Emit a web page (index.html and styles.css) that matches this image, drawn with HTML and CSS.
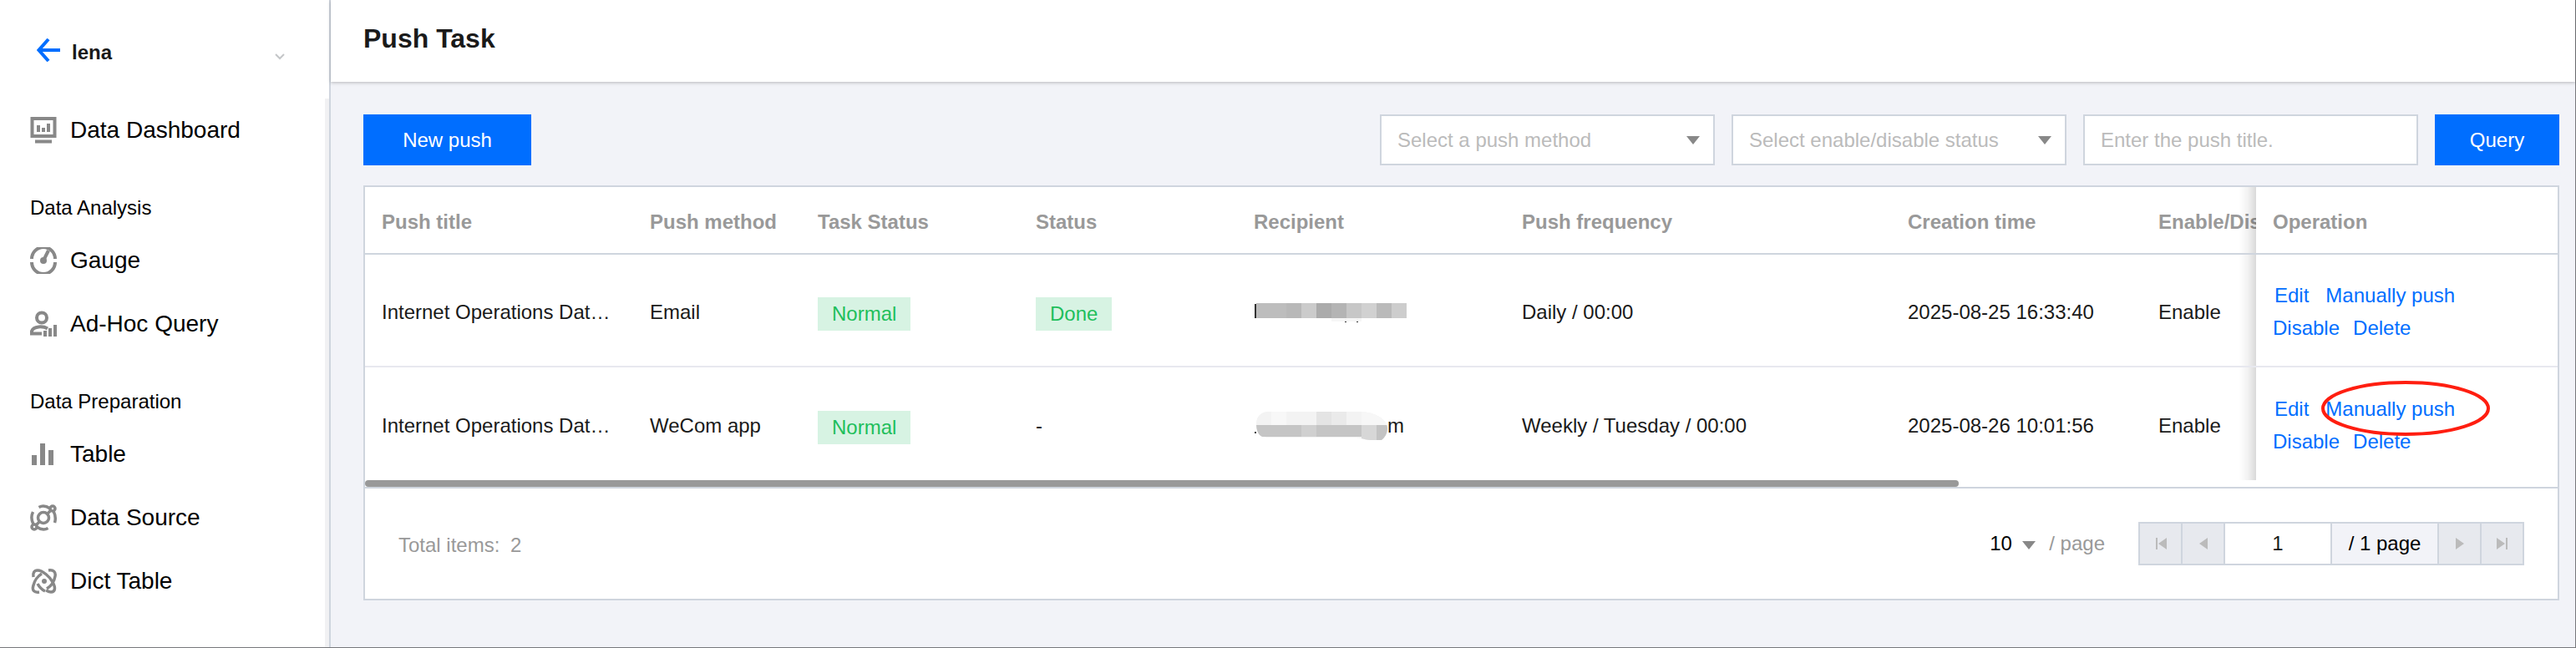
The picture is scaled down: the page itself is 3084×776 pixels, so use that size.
FILE: index.html
```
<!DOCTYPE html>
<html lang="en">
<head>
<meta charset="UTF-8">
<title>Push Task</title>
<link rel="stylesheet" href="styles.css">
</head>
<body>
<div class="page">

	<div class="sidebar">
		<div class="project">
			<a href="#" class="back" aria-label="Back">
				<svg width="28" height="28" viewBox="0 0 28 28"><path d="M14 1 L2.500 14 L14 27 M2.500 14 H28" fill="none" stroke="#006eff" stroke-width="4"/></svg>
			</a>
			<span class="project-name">lena</span>
			<svg class="chevron" width="12" height="8" viewBox="0 0 12 8"><path d="M1 1 L6 6 L11 1" fill="none" stroke="#c4c6c8" stroke-width="2"/></svg>
		</div>
		<nav class="menu">
			<a href="#" class="item">
				<svg width="32" height="32" viewBox="0 0 32 32"><path d="M2.500 2 H29.500 V23 H2.500 Z" fill="none" stroke="#888" stroke-width="4"/><path d="M8 10h4v8H8z M14 13h4v5h-4z M20 8h4v10h-4z M6 27.500h20v4H6z" fill="#888"/></svg>
				Data Dashboard
			</a>
			<div class="group">Data Analysis</div>
			<a href="#" class="item">
				<svg width="32" height="32" viewBox="0 0 32 32"><path d="M2 14 A14 14 0 0 1 30 14 M2 18 A14 14 0 0 0 30 18" fill="none" stroke="#888" stroke-width="4"/><path d="M16 16 L22 4" stroke="#888" stroke-width="4"/><circle cx="16" cy="16" r="4" fill="#888"/></svg>
				Gauge
			</a>
			<a href="#" class="item">
				<svg width="32" height="32" viewBox="0 0 32 32"><circle cx="14" cy="8.500" r="6" fill="none" stroke="#888" stroke-width="4"/><path d="M21 21.500 C16 18.500 4 18 2 24.500 V27.500 H14" fill="none" stroke="#888" stroke-width="4"/><path d="M16 24h4v7h-4z M22 21h4v10h-4z M28 17h4v14h-4z" fill="#888"/></svg>
				Ad-Hoc Query
			</a>
			<div class="group">Data Preparation</div>
			<a href="#" class="item">
				<svg width="32" height="32" viewBox="0 0 32 32"><path d="M2 17h6v12H2z M12 3h6v26h-6z M22 11h6v18h-6z" fill="#888"/></svg>
				Table
			</a>
			<a href="#" class="item">
				<svg width="32" height="32" viewBox="0 0 32 32" fill="none" stroke="#888" stroke-width="3.500"><circle cx="16" cy="16" r="6.500"/><circle cx="27" cy="5" r="3"/><circle cx="5" cy="27" r="3"/><path d="M10.500 3.500 C14 1.500 19 1.500 24 5 M25 7 L20.500 11.500 M28 8 C30.500 13 31 17 29.500 22 M21.500 28.500 C18 30.500 13 30.500 8 27 M7 25 L11.500 20.500 M4 24 C1.500 19 1 14 3.500 9"/></svg>
				Data Source
			</a>
			<a href="#" class="item">
				<svg width="32" height="32" viewBox="0 0 32 32" fill="none" stroke="#888" stroke-width="3.500"><circle cx="17" cy="16" r="3" fill="#888" stroke="none"/><path d="M4 11 C3 6 5 3 9 3 C15 3 24 11 27 17 C31 24 30 29 25 29 C23 29 21 28 19 27 M9 19 C11 23 14 26 18 28"/><path d="M22 3 C28 2 31 5 30 10 C29 16 25 22 20 25 M11 29 C5 30 2 27 4 21 C5 16 9 10 14 7"/></svg>
				Dict Table
			</a>
		</nav>
	</div>

	<div class="main">
		<div class="header"><h1>Push Task</h1></div>
		<div class="content">

			<div class="toolbar">
				<button class="btn">New push</button>
				<div class="filters">
					<div class="select">
						<select aria-label="Push method"><option>Select a push method</option></select>
						<svg class="caret" width="16" height="10" viewBox="0 0 16 10"><path d="M0 0 H16 L8 10 Z" fill="#888"/></svg>
					</div>
					<div class="select">
						<select aria-label="Status"><option>Select enable/disable status</option></select>
						<svg class="caret" width="16" height="10" viewBox="0 0 16 10"><path d="M0 0 H16 L8 10 Z" fill="#888"/></svg>
					</div>
					<input type="text" class="search" placeholder="Enter the push title." aria-label="Push title">
					<button class="btn query">Query</button>
				</div>
			</div>

			<div class="card">
				<div class="scroller">
					<table>
						<colgroup>
							<col class="c-title"><col class="c-method"><col class="c-state"><col class="c-state">
							<col class="c-recipient"><col class="c-freq"><col class="c-time"><col><col class="c-op">
						</colgroup>
						<thead>
							<tr>
								<th>Push title</th>
								<th>Push method</th>
								<th>Task Status</th>
								<th>Status</th>
								<th>Recipient</th>
								<th>Push frequency</th>
								<th>Creation time</th>
								<th>Enable/Disable</th>
								<th class="fixed">Operation</th>
							</tr>
						</thead>
						<tbody>
							<tr>
								<td>Internet Operations Dat…</td>
								<td>Email</td>
								<td><span class="tag">Normal</span></td>
								<td><span class="tag">Done</span></td>
								<td>
									<svg class="mosaic" width="182" height="24" viewBox="0 0 182 24" shape-rendering="crispEdges">
										<path d="M0 1h2v17H0z" fill="#333"/>
										<path d="M2 0h36v18H2z" fill="#bdbdbd"/><path d="M38 0h18v18H38z" fill="#b8b8b8"/>
										<path d="M56 0h18v18H56z" fill="#cbcbcb"/><path d="M74 0h18v18H74z" fill="#ababab"/>
										<path d="M92 0h18v18H92z" fill="#b4b4b4"/><path d="M110 0h18v18h-18z" fill="#c7c7c7"/>
										<path d="M128 0h18v18h-18z" fill="#d1d1d1"/><path d="M146 0h18v18h-18z" fill="#bababa"/>
										<path d="M164 0h18v18h-18z" fill="#cdcdcd"/><path d="M92 18h36v4H92z" fill="#f6f6f6"/>
										<path d="M108 22h2v1h-2z M122 22h2v1h-2z" fill="#333"/>
									</svg>
								</td>
								<td>Daily / 00:00</td>
								<td>2025-08-25 16:33:40</td>
								<td>Enable</td>
								<td class="fixed">
									<div class="ops first"><a href="#">Edit</a><a href="#">Manually push</a></div>
									<div class="ops"><a href="#">Disable</a><a href="#">Delete</a></div>
								</td>
							</tr>
							<tr>
								<td>Internet Operations Dat…</td>
								<td>WeCom app</td>
								<td><span class="tag">Normal</span></td>
								<td>-</td>
								<td>
									<span class="masked">
										<svg class="mosaic" width="159" height="34" viewBox="0 0 159 34">
											<clipPath id="blob"><path d="M2 14 C2 6 8 0 16 0 H126 C142 0 159 8 159 20 C159 26 156 31 152 34 H138 C132 34 128 31 120 31 H16 C8 31 2 28 2 14 Z"/></clipPath>
											<path d="M0 24h2v2H0z M108 29h3v2h-3z" fill="#333"/>
											<g clip-path="url(#blob)" shape-rendering="crispEdges">
												<path d="M0 0h159v34H0z" fill="#f3f3f3"/>
												<path d="M20 0h18v16H20z" fill="#f8f8f8"/><path d="M74 0h18v16H74z" fill="#e4e4e4"/>
												<path d="M92 0h18v16H92z" fill="#eaeaea"/><path d="M128 0h31v16h-31z" fill="#f7f7f7"/>
												<path d="M2 16h126v14H2z" fill="#c5c5c5"/><path d="M56 16h18v14H56z" fill="#d0d0d0"/>
												<path d="M128 16h18v18h-18z" fill="#d7d7d7"/><path d="M146 16h13v18h-13z" fill="#c3c3c3"/>
											</g>
										</svg>m
									</span>
								</td>
								<td>Weekly / Tuesday / 00:00</td>
								<td>2025-08-26 10:01:56</td>
								<td>Enable</td>
								<td class="fixed">
									<div class="ops first"><a href="#">Edit</a><a href="#" class="marked">Manually push<svg class="ring" width="202" height="66" viewBox="0 0 202 66"><ellipse cx="101" cy="33" rx="99" ry="31" fill="none" stroke="#ff1e10" stroke-width="4"/></svg></a></div>
									<div class="ops"><a href="#">Disable</a><a href="#">Delete</a></div>
								</td>
							</tr>
						</tbody>
					</table>
				</div>
				<div class="scrollbar"><div class="thumb"></div></div>

				<div class="footer">
					<div class="total">Total items: <span>2</span></div>
					<div class="size">
						<div class="size-select">
							<select aria-label="Items per page"><option>10</option></select>
							<svg class="caret" width="16" height="10" viewBox="0 0 16 10"><path d="M0 0 H16 L8 10 Z" fill="#888"/></svg>
						</div>
						<span>/ page</span>
					</div>
					<div class="pager">
						<button disabled aria-label="First page"><svg width="14" height="14" viewBox="0 0 14 14"><path d="M1 0h2v14H1z M14 0v14L4 7z" fill="#bbb"/></svg></button>
						<button disabled aria-label="Previous page"><svg width="10" height="14" viewBox="0 0 10 14"><path d="M10 0v14L0 7z" fill="#bbb"/></svg></button>
						<input type="text" value="1" aria-label="Page">
						<span class="pages">/ 1 page</span>
						<button disabled aria-label="Next page"><svg width="10" height="14" viewBox="0 0 10 14"><path d="M0 0v14l10-7z" fill="#bbb"/></svg></button>
						<button disabled aria-label="Last page"><svg width="14" height="14" viewBox="0 0 14 14"><path d="M11 0h2v14h-2z M0 0v14l10-7z" fill="#bbb"/></svg></button>
					</div>
				</div>
			</div>

		</div>
	</div>

</div>
</body>
</html>
```
FILE: styles.css
```
* {
	box-sizing: border-box;
}

body {
	margin: 0;
	font-family: "Liberation Sans", Arial, sans-serif;
	font-size: 24px;
	line-height: 28px;
	color: #1a1a1a;
}

a {
	color: #006eff;
	text-decoration: none;
}

svg {
	display: block;
	flex: none;
}

button, input, select {
	font: inherit;
	margin: 0;
	border-radius: 0;
}

.page {
	display: flex;
	min-height: 100vh;
	border-right: 1px solid #77787c;
	border-bottom: 1px solid #77787c;
}

/* sidebar */
.sidebar {
	flex: none;
	display: flex;
	flex-direction: column;
	width: 396px;
	border-right: 2px solid #cfd5de;
	background: #fff;
}

.project {
	display: flex;
	align-items: center;
	height: 118px;
	padding: 2px 53px 0 44px;
}

.project-name {
	flex: 1;
	padding: 6px 0 0 14px;
	font-weight: bold;
}

.chevron {
	margin-top: 16px;
}

.menu {
	flex: 1;
	border-right: 5px solid #f1f1f3;
	padding-left: 36px;
}

.item {
	display: flex;
	align-items: center;
	gap: 16px;
	height: 76px;
	font-size: 28px;
	color: #000;
}

.group {
	height: 80px;
	padding-top: 32px;
	line-height: 46px;
	color: #000;
}

/* main */
.main {
	flex: 1;
	min-width: 0;
	background: #f2f3f8;
}

.header {
	height: 98px;
	padding-left: 39px;
	background: #fff;
	box-shadow: 0 1px 4px rgba(0, 0, 0, 0.25);
}

h1 {
	margin: 0;
	font-size: 32px;
	line-height: 92px;
}

.content {
	padding: 39px 19px 24px 39px;
}

.toolbar {
	display: flex;
	justify-content: space-between;
	margin-bottom: 24px;
}

.btn {
	width: 201px;
	height: 61px;
	padding: 0;
	border: 0;
	background: #006eff;
	color: #fff;
}

.query {
	width: 149px;
}

.filters {
	display: flex;
	gap: 20px;
}

.select {
	position: relative;
	width: 401px;
}

.select select, .search {
	width: 401px;
	height: 61px;
	padding: 0 19px;
	border: 2px solid #cfd5de;
	background: #fff;
	color: #bbb;
}

.search::placeholder {
	color: #bbb;
	opacity: 1;
}

select {
	appearance: none;
}

.caret {
	position: absolute;
	right: 18px;
	top: 26px;
	pointer-events: none;
}

/* table */
.card {
	border: 2px solid #cfd5de;
	background: #fff;
}

.scroller {
	overflow: hidden;
}

table {
	width: 3612px;
	table-layout: fixed;
	border-collapse: separate;
	border-spacing: 0;
}

.c-title, .c-recipient { width: 321px; }
.c-method { width: 201px; }
.c-state { width: 261px; }
.c-freq { width: 462px; }
.c-time { width: 300px; }
.c-op { width: 361px; }

th, td {
	padding: 0 20px;
	text-align: left;
	white-space: nowrap;
	overflow: hidden;
	text-overflow: ellipsis;
}

th {
	height: 81px;
	padding-top: 4px;
	border-bottom: 2px solid #cfd5de;
	color: #999;
}

td {
	height: 135px;
	padding-top: 4px;
}

tbody tr:first-child td {
	border-bottom: 2px solid #e7e8ef;
}

.fixed {
	position: sticky;
	right: 0;
	overflow: visible;
	background: #fff;
}

td.fixed {
	padding-top: 2px;
}

.fixed::before {
	content: "";
	position: absolute;
	top: 0;
	bottom: 0;
	left: -20px;
	width: 20px;
	background: linear-gradient(to right, rgba(0, 0, 0, 0), rgba(0, 0, 0, 0.05) 50%, rgba(0, 0, 0, 0.15));
}

.tag {
	display: inline-block;
	margin-top: 4px;
	padding: 0 17px;
	line-height: 40px;
	background: #d7f3e3;
	color: #1fbf5c;
}

.mosaic {
	margin: 3px 0 0 1px;
}

.masked {
	display: flex;
	align-items: center;
}

.masked .mosaic {
	margin-top: 0;
}

.ops {
	display: flex;
	gap: 16px;
	line-height: 39px;
}

.first {
	gap: 20px;
	padding-left: 2px;
}

.marked {
	position: relative;
}

.ring {
	position: absolute;
	left: -5px;
	top: -14px;
	z-index: 1;
}

.scrollbar {
	height: 8px;
}

.thumb {
	width: 72.7%;
	height: 8px;
	border-radius: 4px;
	background: #999;
}

/* footer */
.footer {
	display: flex;
	align-items: center;
	gap: 40px;
	height: 134px;
	padding: 0 40px;
	border-top: 2px solid #cfd5de;
}

.total {
	flex: 1;
	padding-top: 4px;
	color: #999;
}

.total span {
	margin-left: 6px;
}

.size {
	display: flex;
	gap: 16px;
	color: #999;
}

.size-select {
	position: relative;
	width: 55px;
}

.size-select select {
	width: 55px;
	height: 28px;
	padding: 0;
	border: 0;
	background: none;
	color: #000;
}

.size-select .caret {
	right: 0;
	top: 11px;
}

.pager {
	display: flex;
	height: 52px;
	border: 2px solid #cfd5de;
}

.pager button {
	display: flex;
	align-items: center;
	justify-content: center;
	width: 49px;
	padding: 0;
	border: 0;
	background: #e7e9ee;
}

.pager button + button {
	width: 51px;
	border-left: 2px solid #cfd5de;
}

.pager input {
	width: 128px;
	padding: 0;
	border: 0;
	border-left: 2px solid #cfd5de;
	text-align: center;
	color: #1a1a1a;
}

.pages {
	width: 130px;
	border-left: 2px solid #cfd5de;
	border-right: 2px solid #cfd5de;
	background: #f2f3f8;
	line-height: 48px;
	text-align: center;
	color: #000;
}
```
